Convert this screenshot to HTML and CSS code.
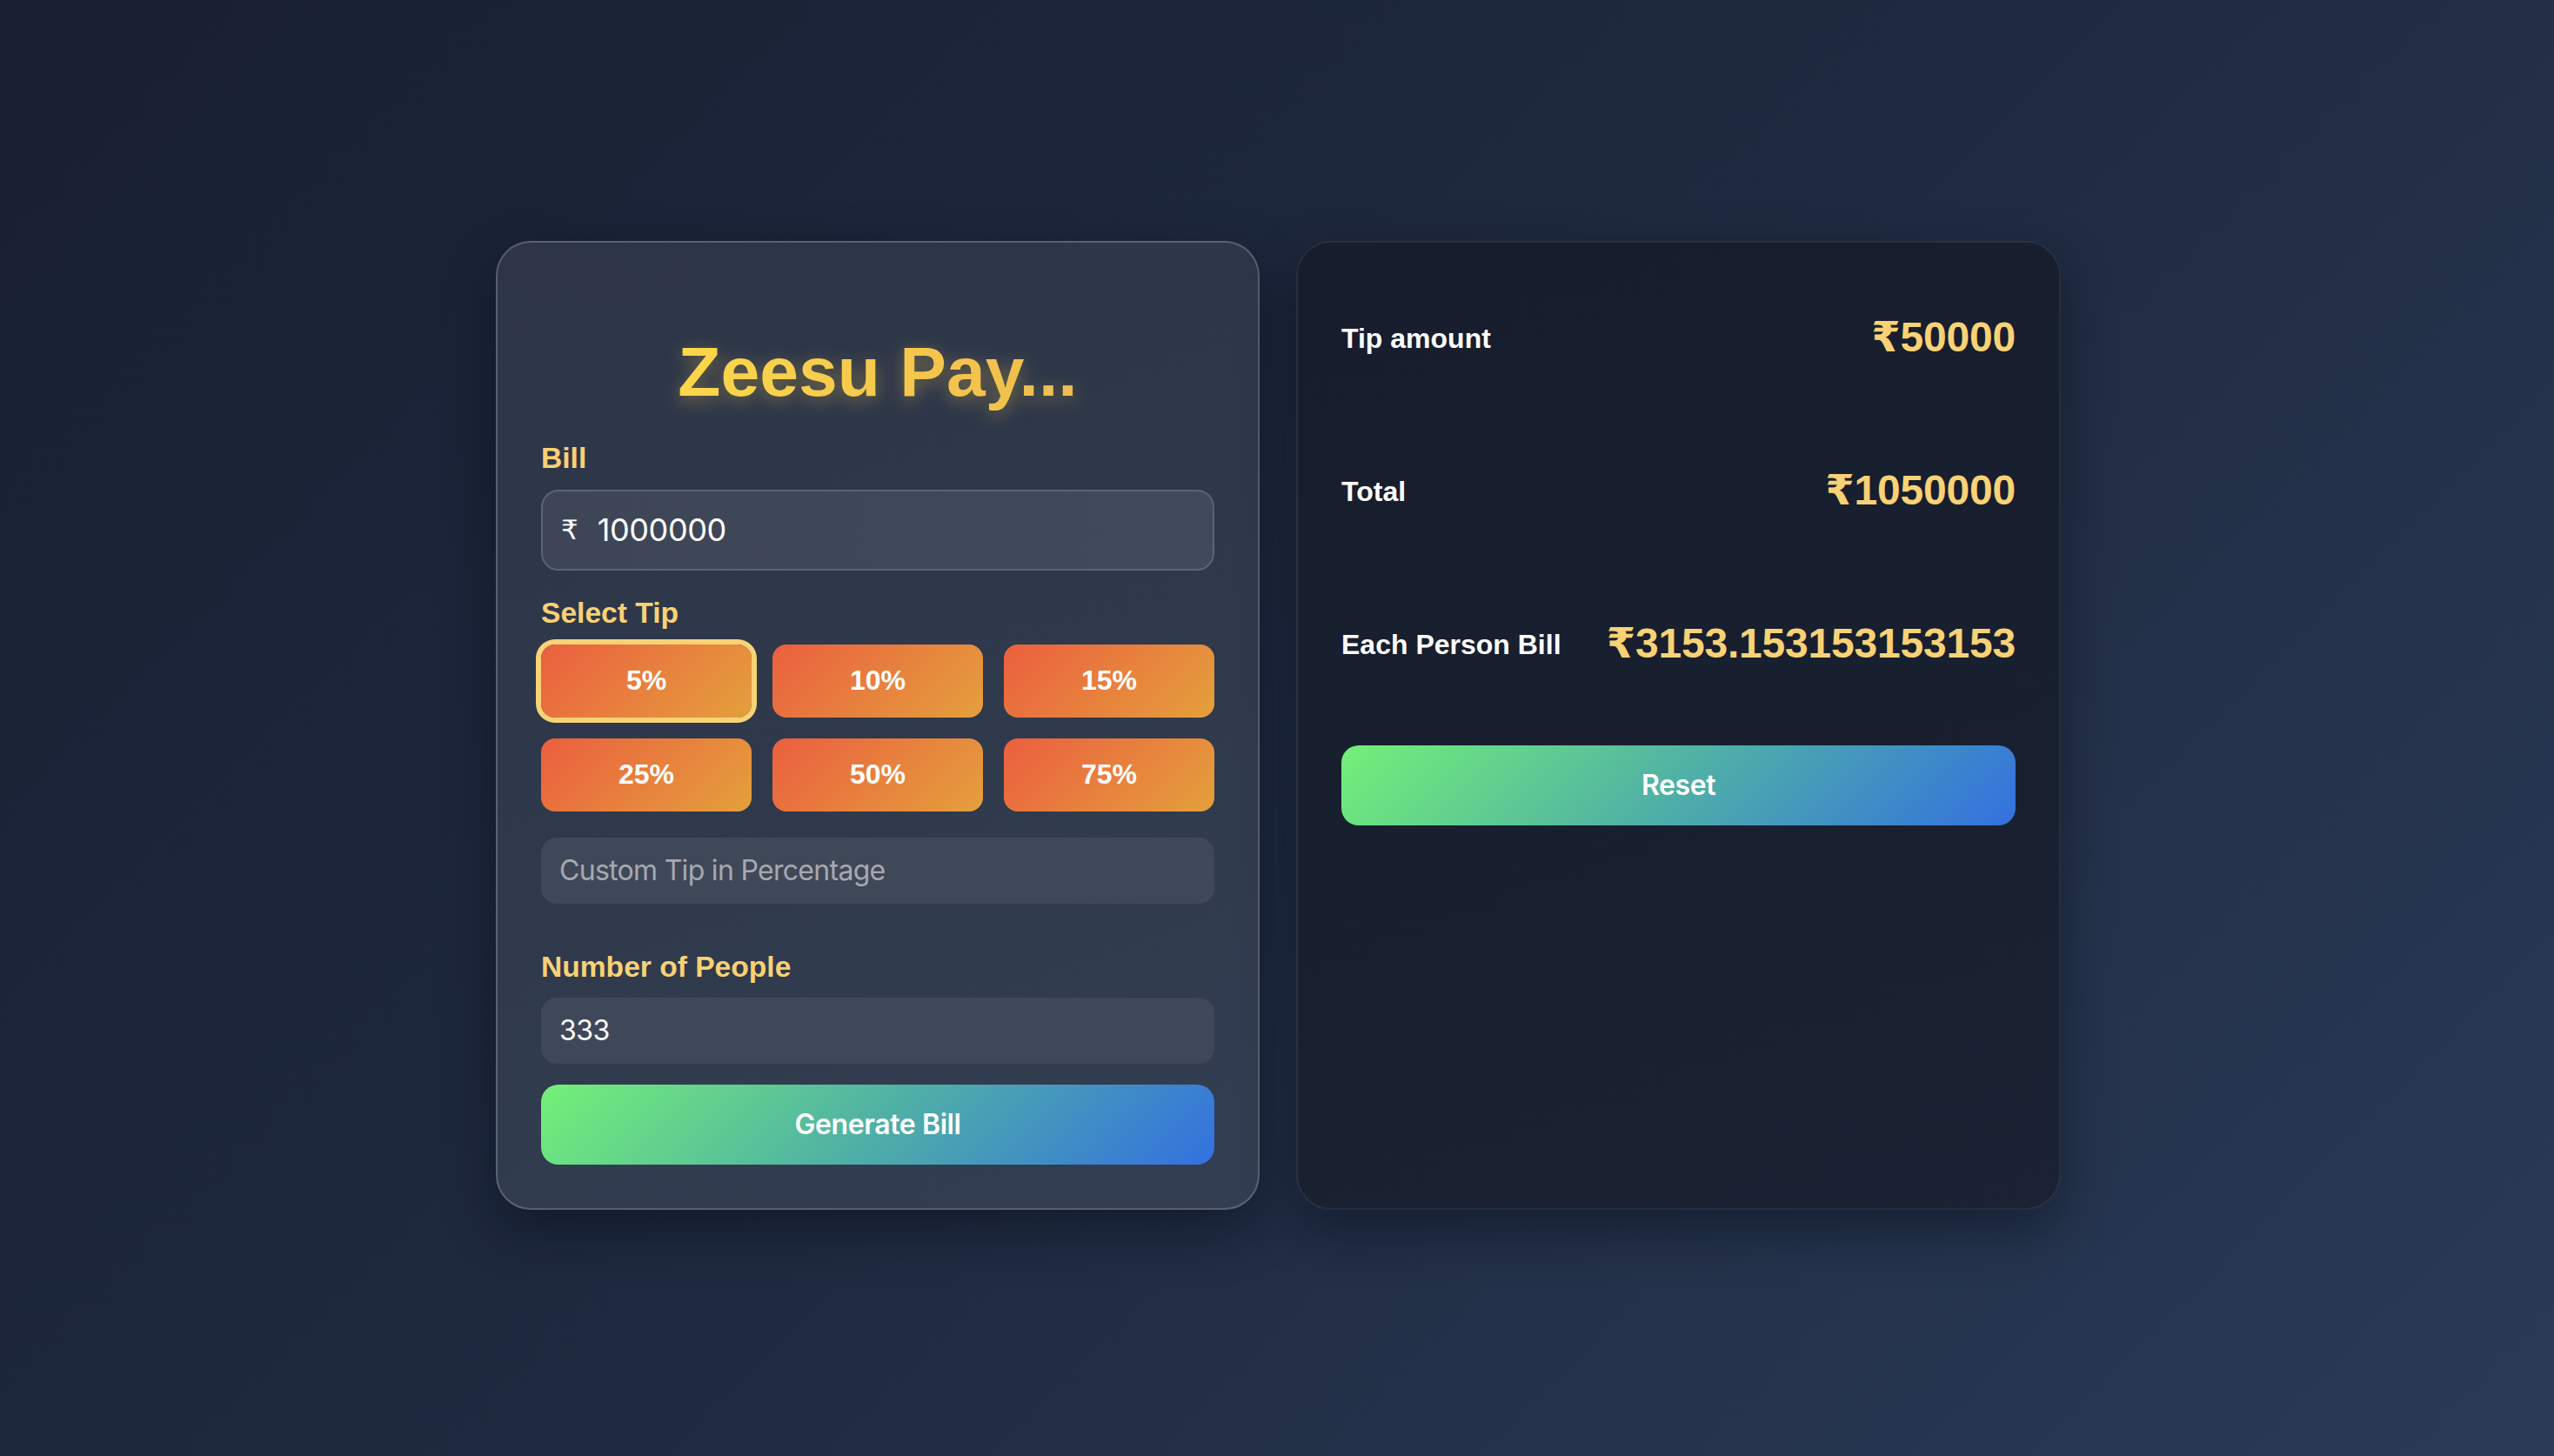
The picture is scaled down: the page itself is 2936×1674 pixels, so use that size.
FILE: index.html
```html
<!DOCTYPE html>
<html lang="en">
<head>
<meta charset="utf-8">
<title>Zeesu Pay</title>
<link rel="stylesheet" href="styles.css">
</head>
<body>
<main class="app">
  <section class="card calc">
    <h1 class="title">Zeesu Pay...</h1>

    <div class="label label-bill">Bill</div>
    <div class="bill-input">
      <span class="rupee">₹</span>
      <input class="bill-field" type="text" value="1000000">
    </div>

    <div class="label label-tip">Select Tip</div>
    <div class="tips">
      <button class="tip active">5%</button>
      <button class="tip">10%</button>
      <button class="tip">15%</button>
      <button class="tip">25%</button>
      <button class="tip">50%</button>
      <button class="tip">75%</button>
    </div>

    <input class="field custom" type="text" placeholder="Custom Tip in Percentage">

    <div class="label label-people">Number of People</div>
    <input class="field people" type="text" value="333">

    <button class="action generate">Generate Bill</button>
  </section>

  <section class="card result">
    <div class="rows">
      <div class="row">
        <span class="row-label">Tip amount</span>
        <span class="row-value">₹50000</span>
      </div>
      <div class="row">
        <span class="row-label">Total</span>
        <span class="row-value">₹1050000</span>
      </div>
      <div class="row">
        <span class="row-label">Each Person Bill</span>
        <span class="row-value">₹3153.153153153153</span>
      </div>
    </div>
    <button class="action reset">Reset</button>
  </section>
</main>
</body>
</html>
```

FILE: styles.css
```css
* {
  box-sizing: border-box;
}

html, body {
  margin: 0;
  height: 100%;
}

body {
  min-height: 100vh;
  padding: 0 0 7px 3px;
  display: flex;
  align-items: center;
  justify-content: center;
  background: linear-gradient(135deg, #181f31 0%, #1f2a40 50%, #2a3b57 100%);
  font-family: "Liberation Sans", Arial, sans-serif;
  color: #ffffff;
}

.app {
  display: flex;
  gap: 42px;
  align-items: stretch;
}

.card {
  width: 878px;
  border-radius: 40px;
  padding: 50px;
  display: flex;
  flex-direction: column;
  box-shadow: 0 24px 60px rgba(5, 10, 20, 0.45);
}

.calc {
  background: linear-gradient(160deg, #2d3547 0%, #2f394b 50%, #333e52 100%);
  border: 2px solid rgba(255, 255, 255, 0.2);
}

.result {
  width: 879px;
  background: linear-gradient(160deg, #171d2c 0%, #182030 60%, #1a2233 100%);
  border: 2px solid rgba(255, 255, 255, 0.07);
}

.title {
  margin: 50px 0 0;
  font-family: "Liberation Sans", Arial, sans-serif;
  font-weight: 700;
  font-size: 80.5px;
  line-height: 96px;
  text-align: center;
  color: #f5c94b;
  background: linear-gradient(90deg, #fbd74b 0%, #f4c64d 60%, #eebd50 100%);
  -webkit-background-clip: text;
  background-clip: text;
  -webkit-text-fill-color: transparent;
  filter: drop-shadow(0 5px 10px rgba(240, 196, 70, 0.38));
  align-self: center;
}

.label {
  font-family: "Liberation Sans", Arial, sans-serif;
  font-weight: 700;
  font-size: 33.6px;
  line-height: 36px;
  color: #f9d174;
}

.label-bill { margin-top: 34px; }
.label-tip { margin-top: 31px; }
.label-people { margin-top: 55px; }

.bill-input {
  margin-top: 18px;
  height: 93px;
  display: flex;
  align-items: center;
  padding: 0 20px 0 21px;
  border: 2px solid #5b6374;
  border-radius: 20px;
  background: linear-gradient(100deg, #3d4556 0%, #414a5c 100%);
}

.rupee {
  font-family: "DejaVu Sans", sans-serif;
  font-size: 31px;
  line-height: 1;
  color: #ffffff;
  margin-right: 22px;
}

.bill-field {
  flex: 1;
  min-width: 0;
  border: 0;
  outline: 0;
  background: transparent;
  color: #ffffff;
  font-family: "Inter", "Roboto", sans-serif;
  font-size: 36px;
  letter-spacing: -0.4px;
  padding: 0;
}

.tips {
  margin-top: 18px;
  display: grid;
  grid-template-columns: repeat(3, 1fr);
  grid-auto-rows: 84px;
  gap: 24px;
}

.tip {
  border: 0;
  border-radius: 16px;
  background: linear-gradient(135deg, #eb5f3f 0%, #e4a03c 100%);
  color: #ffffff;
  font-family: "Liberation Sans", Arial, sans-serif;
  font-weight: 700;
  font-size: 32px;
  cursor: pointer;
}

.tip.active {
  box-shadow: 0 0 0 6px #f8d376;
}

.field {
  width: 100%;
  height: 76px;
  border: 0;
  outline: 0;
  border-radius: 18px;
  padding: 0 21px;
  background: #3f4859;
  color: #ffffff;
  font-family: "Inter", "Roboto", sans-serif;
  font-size: 32px;
  letter-spacing: -0.5px;
}

.field::placeholder {
  color: #a7a9ae;
  letter-spacing: -0.7px;
}

.custom { margin-top: 30px; }
.people { margin-top: 17px; }

.action {
  height: 92px;
  border: 0;
  border-radius: 20px;
  background: linear-gradient(135deg, #74f077 0%, #4fb0a6 50%, #3370e0 100%);
  color: #ffffff;
  font-family: "Inter", "Roboto", sans-serif;
  font-weight: 600;
  font-size: 32px;
  letter-spacing: -0.4px;
  cursor: pointer;
}

.generate { margin-top: 24px; }

.rows {
  margin-top: 31px;
  display: flex;
  flex-direction: column;
  gap: 120px;
}

.row {
  height: 56px;
  display: flex;
  align-items: center;
  justify-content: space-between;
}

.row-label {
  font-family: "Liberation Sans", Arial, sans-serif;
  font-weight: 700;
  font-size: 32px;
  line-height: 36px;
  color: #ffffff;
  margin-top: 2px;
}

.row-value {
  font-family: "Liberation Sans", "DejaVu Sans", Arial, sans-serif;
  font-weight: 700;
  font-size: 48px;
  line-height: 56px;
  letter-spacing: -0.2px;
  color: #f8d275;
}

.reset { margin-top: 89px; }
```
